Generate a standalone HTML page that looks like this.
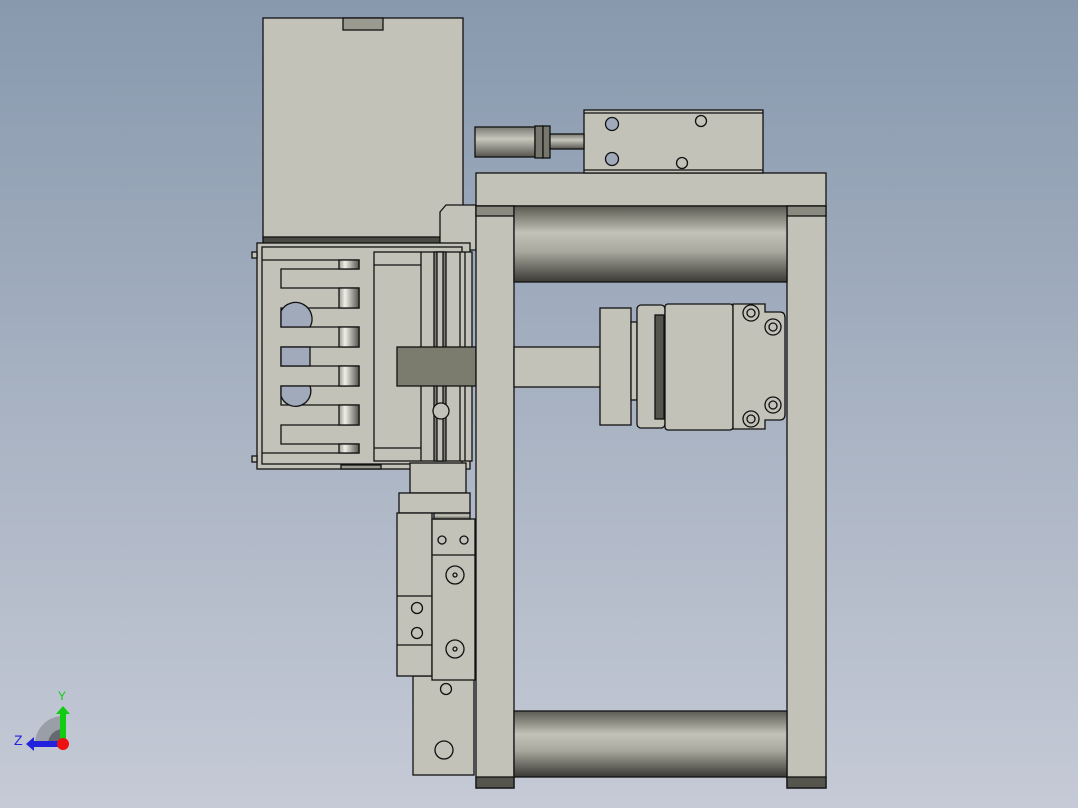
<!DOCTYPE html>
<html><head><style>
html,body{margin:0;padding:0}
body{width:1078px;height:808px;overflow:hidden;background:linear-gradient(#8899ae,#aeb7c6 60%,#c5cad6)}
svg{position:absolute;left:0;top:0}
</style></head><body>
<svg width="1078" height="808" viewBox="0 0 1078 808" font-family="Liberation Sans, sans-serif">
<defs>
<linearGradient id="roll" x1="0" y1="0" x2="0" y2="1">
<stop offset="0" stop-color="#5a5a52"/><stop offset="0.35" stop-color="#c2c2b8"/><stop offset="0.6" stop-color="#a8a89e"/><stop offset="1" stop-color="#3a3a34"/></linearGradient>
<linearGradient id="cyl" x1="0" y1="0" x2="0" y2="1">
<stop offset="0" stop-color="#7a7a72"/><stop offset="0.4" stop-color="#c6c6bc"/><stop offset="1" stop-color="#55554e"/></linearGradient>
<linearGradient id="pin" x1="0" y1="0" x2="1" y2="0">
<stop offset="0" stop-color="#9a9a90"/><stop offset="0.3" stop-color="#f0f0e8"/><stop offset="1" stop-color="#55554e"/></linearGradient>
</defs>
<g stroke="#111" stroke-width="1.3" fill="#c2c2b8">
<!-- top block -->
<rect x="263" y="18" width="200" height="220"/>
<rect x="343" y="18" width="40" height="12" fill="#9a9a90"/>
<rect x="263" y="237" width="177" height="7" fill="#4a4a44"/>
<polygon points="440,212 446,205 476,205 476,250 440,250"/>
<!-- gripper housing -->
<rect x="257" y="243" width="213" height="226"/>
<rect x="262" y="247" width="200" height="217"/>
<rect x="252" y="252" width="5" height="6"/><rect x="252" y="456" width="5" height="6"/>
<path d="M262 260 H359 V269 H281 V288 H359 V308 H281 V327 H359 V347 H281 V366 H359 V386 H281 V405 H359 V425 H281 V444 H359 V453 H262" fill="none"/>
<g fill="url(#pin)"><rect x="339" y="260" width="20" height="9"/><rect x="339" y="288" width="20" height="20"/><rect x="339" y="327" width="20" height="20"/><rect x="339" y="366" width="20" height="20"/><rect x="339" y="405" width="20" height="20"/><rect x="339" y="444" width="20" height="9"/></g>
<path d="M281 327 V311 A14 14 0 0 1 310 327 Z" fill="#a0aabb"/>
<rect x="281" y="347" width="29" height="19" fill="#a0aabb"/>
<path d="M281 386 V396 A14 14 0 0 0 310 386 Z" fill="#a0aabb"/>
<rect x="374" y="252" width="98" height="209"/>
<line x1="374" y1="265" x2="421" y2="265"/><line x1="374" y1="448" x2="421" y2="448"/>
<line x1="421" y1="252" x2="421" y2="461"/>
<rect x="434" y="252" width="12" height="209" fill="#7c7c72"/>
<rect x="437" y="252" width="6" height="209"/>
<line x1="460" y1="252" x2="460" y2="461"/><line x1="465" y1="252" x2="465" y2="461"/>
<circle cx="441" cy="411" r="8"/>
<rect x="341" y="465" width="40" height="4" fill="#9a9a90"/>
<!-- dark block -->
<rect x="397" y="347" width="79" height="39" fill="#7c7c6e"/>
<!-- frame -->
<rect x="476" y="173" width="350" height="33"/>
<rect x="476" y="206" width="38" height="582"/>
<rect x="787" y="206" width="39" height="582"/>
<rect x="476" y="206" width="38" height="10" fill="#8a8a80"/>
<rect x="787" y="206" width="39" height="10" fill="#8a8a80"/>
<rect x="476" y="777" width="38" height="11" fill="#55554e"/>
<rect x="787" y="777" width="39" height="11" fill="#55554e"/>
<rect x="514" y="206" width="273" height="76" fill="url(#roll)"/>
<rect x="514" y="711" width="273" height="66" fill="url(#roll)"/>
<!-- sensor -->
<rect x="584" y="110" width="179" height="63"/>
<line x1="584" y1="113" x2="763" y2="113"/><line x1="584" y1="170" x2="763" y2="170"/>
<rect x="475" y="127" width="60" height="30" fill="url(#cyl)"/>
<rect x="535" y="126" width="8" height="32" fill="#77776e"/><rect x="543" y="126" width="7" height="32" fill="#77776e"/>
<rect x="550" y="134" width="34" height="15" fill="url(#cyl)"/>
<circle cx="612" cy="124" r="6.5" fill="#a0aabb"/><circle cx="612" cy="159" r="6.5" fill="#a0aabb"/>
<circle cx="701" cy="121" r="5.5"/><circle cx="682" cy="163" r="5.5"/>
<!-- shaft & actuator -->
<rect x="514" y="347" width="87" height="40"/>
<rect x="600" y="308" width="31" height="117"/>
<rect x="631" y="322" width="6" height="78"/>
<rect x="637" y="305" width="28" height="123" rx="4"/>
<rect x="655" y="315" width="9" height="104" fill="#55554e"/>
<rect x="665" y="304" width="68" height="126" rx="3"/>
<path d="M733 304 H765 V312 H780 Q785 312 785 318 V414 Q785 420 780 420 H765 V429 H733 Z"/>
<g fill="none"><circle cx="751" cy="313" r="8"/><circle cx="773" cy="327" r="8"/><circle cx="773" cy="405" r="8"/><circle cx="751" cy="419" r="8"/>
<circle cx="751" cy="313" r="4"/><circle cx="773" cy="327" r="4"/><circle cx="773" cy="405" r="4"/><circle cx="751" cy="419" r="4"/></g>
<!-- lower assembly -->
<rect x="410" y="463" width="56" height="30"/>
<rect x="399" y="493" width="71" height="20"/>
<rect x="413" y="676" width="61" height="99"/>
<rect x="397" y="513" width="35" height="163"/>
<line x1="397" y1="596" x2="432" y2="596"/><line x1="397" y1="645" x2="432" y2="645"/>
<rect x="432" y="519" width="43" height="161"/>
<rect x="434" y="513" width="36" height="6" fill="url(#cyl)"/>
<line x1="432" y1="555" x2="475" y2="555"/>
<g fill="none"><circle cx="442" cy="540" r="4"/><circle cx="464" cy="540" r="4"/>
<circle cx="455" cy="575" r="9"/><circle cx="455" cy="575" r="2"/>
<circle cx="455" cy="649" r="9"/><circle cx="455" cy="649" r="2"/>
<circle cx="417" cy="608" r="5.5"/><circle cx="417" cy="633" r="5.5"/>
<circle cx="446" cy="689" r="5.5"/><circle cx="444" cy="750" r="9"/></g>
</g>
<!-- triad -->
<path d="M35 744 A28 28 0 0 1 63 716 V744 Z" fill="#9a9ea6"/>
<path d="M48 744 A15 15 0 0 1 63 729 V744 Z" fill="#666a70"/>
<rect x="60" y="712" width="6" height="30" fill="#1c1"/><polygon points="56,714 63,706 70,714" fill="#1c1"/>
<rect x="32" y="741" width="30" height="6" fill="#22d"/><polygon points="34,737 26,744 34,751" fill="#22d"/>
<circle cx="63" cy="744" r="6" fill="#e11"/>
<text x="58" y="700" font-size="12" fill="#1c1">Y</text>
<text x="14" y="745" font-size="14" fill="#22d">Z</text>
</svg>
</body></html>
